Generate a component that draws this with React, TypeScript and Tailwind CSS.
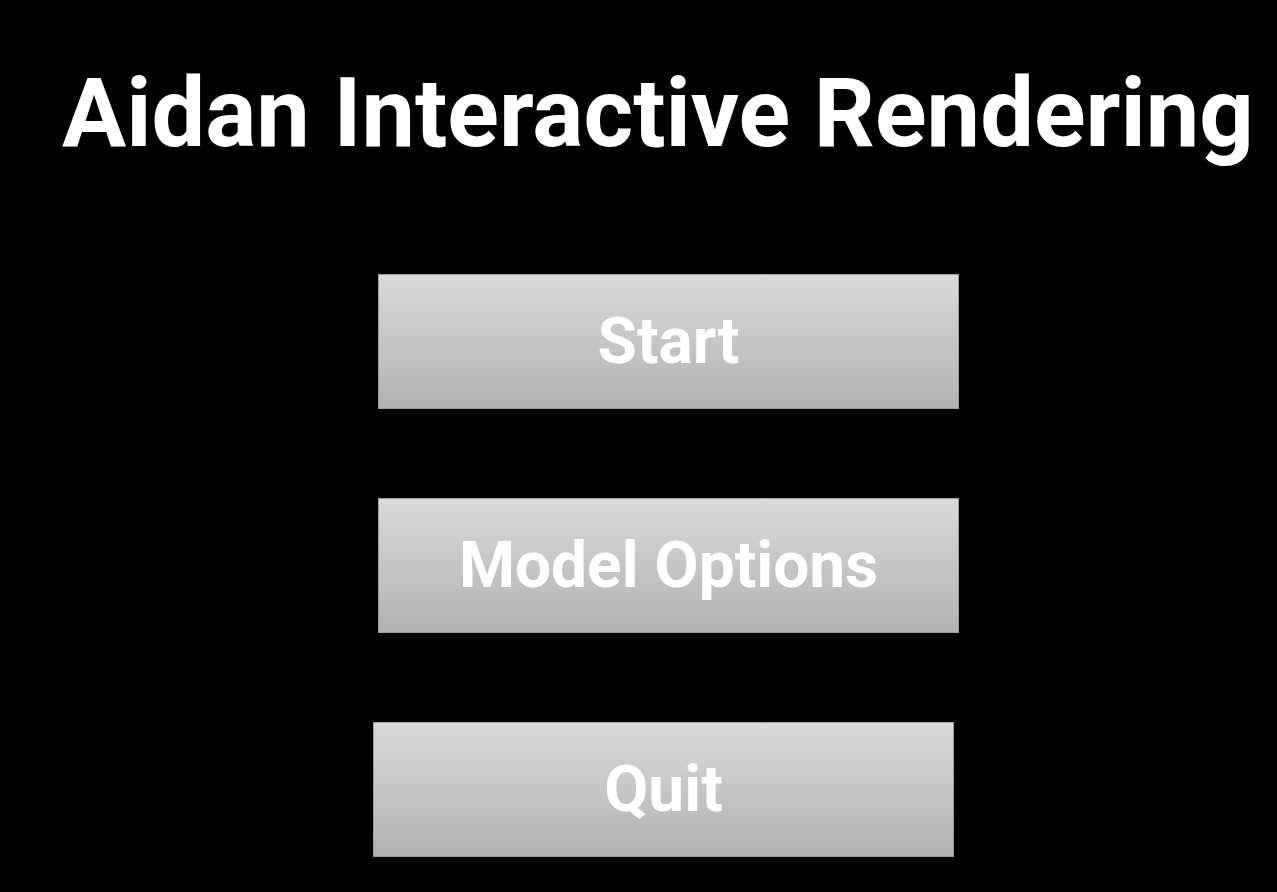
export default function App() {
  return (
    <div className="w-[1277px] h-[892px] bg-black overflow-hidden" style={{ fontFamily: "Roboto, 'Liberation Sans', sans-serif" }}>
      <h1 className="pt-[58px] pl-[62px] text-[95.5px] leading-[110px] font-bold text-white whitespace-nowrap">
        Aidan Interactive Rendering
      </h1>

      <div className="flex flex-col">
        <MenuButton label="Start" className="mt-[106px] ml-[378px]" />
        <MenuButton label="Model Options" className="mt-[89px] ml-[378px]" />
        <MenuButton label="Quit" className="mt-[89px] ml-[373px]" />
      </div>
    </div>
  )
}

function MenuButton({ label, className }: { label: string; className: string }) {
  return (
    <button
      className={
        "w-[581px] h-[135px] flex items-center justify-center border border-[#9c9c9c] bg-gradient-to-b from-[#dadada] to-[#b2b2b2] text-white text-[64px] font-bold " +
        className
      }
    >
      {label}
    </button>
  )
}
